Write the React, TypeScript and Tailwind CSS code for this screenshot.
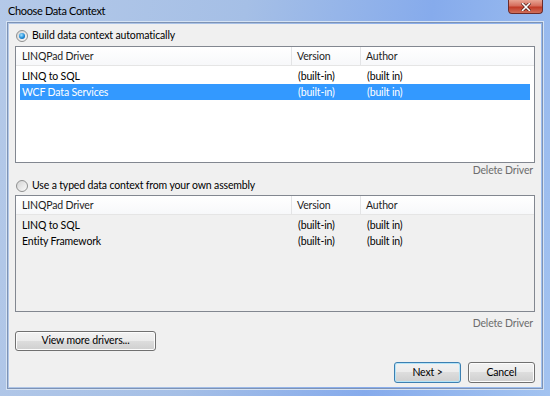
import React from 'react';

const font = { fontFamily: '"Segoe UI", Lato, "Open Sans", sans-serif' };

type Row = { name: string; version: string; author: string };

const autoDrivers: Row[] = [
  { name: 'LINQ to SQL', version: '(built-in)', author: '(built in)' },
  { name: 'WCF Data Services', version: '(built-in)', author: '(built in)' },
];

const typedDrivers: Row[] = [
  { name: 'LINQ to SQL', version: '(built-in)', author: '(built in)' },
  { name: 'Entity Framework', version: '(built-in)', author: '(built in)' },
];

function Radio({ checked }: { checked?: boolean }) {
  return (
    <span className="relative flex h-[12px] w-[12px] items-center justify-center rounded-full border border-[#8e8f8f] bg-gradient-to-br from-[#d4d4d4] to-[#fafafa]">
      {checked && (
        <span className="h-[6px] w-[6px] rounded-full bg-[radial-gradient(circle_at_40%_35%,#a6e3ff,#1b8ad8_55%,#0a4f8e)]" />
      )}
    </span>
  );
}

function DriverList({ rows, selected, disabled }: { rows: Row[]; selected?: number; disabled?: boolean }) {
  return (
    <div className={`h-[117px] border border-[#828790] ${disabled ? 'bg-[#f0f0f0]' : 'bg-white'}`}>
      <div className="flex h-[19px] items-center border-b border-[#e5e5e5] bg-gradient-to-b from-white to-[#f7f8fa] text-[#1e1e1e]">
        <div className="w-[276px] border-r border-[#e3e4e6] pl-[6px] leading-[18px]">LINQPad Driver</div>
        <div className="w-[69px] border-r border-[#e3e4e6] pl-[5px] leading-[18px]">Version</div>
        <div className="flex-1 pl-[5px] leading-[18px]">Author</div>
      </div>
      <div className="px-[4px] pt-[2px]">
        {rows.map((r, i) => {
          const sel = i === selected;
          return (
            <div
              key={i}
              className={`flex h-[16px] items-center leading-[16px] ${sel ? 'bg-[#3399ff] text-white' : 'text-black'}`}
            >
              <div className="w-[277px] pl-[2px]">{r.name}</div>
              <div className="w-[69px] pl-[1px]">{r.version}</div>
              <div className="flex-1 pl-[1px]">{r.author}</div>
            </div>
          );
        })}
      </div>
    </div>
  );
}

function Button({ children, focused, className }: { children: React.ReactNode; focused?: boolean; className?: string }) {
  return (
    <div
      className={`flex items-center justify-center rounded-[3px] border ${
        focused ? 'border-[#3c7fb1] shadow-[inset_0_0_0_1px_#b4e4f8]' : 'border-[#707070] shadow-[inset_0_0_0_1px_#fcfcfc]'
      } bg-[linear-gradient(#f2f2f2,#ebebeb_50%,#dddddd_50%,#cfcfcf)] text-black ${className ?? ''}`}
    >
      {children}
    </div>
  );
}

export default function App() {
  return (
    <div
      style={font}
      className="flex h-[396px] w-[550px] flex-col overflow-hidden bg-[linear-gradient(100deg,#b4c9e8,#a5bfe6_40%,#86abec_70%,#a3c3f0)] text-[10.5px] tracking-[-0.15px]"
    >
      <div className="flex h-[22px] items-start justify-between">
        <div className="pl-[8px] pt-[4px] text-[11px] leading-[14px] tracking-[-0.35px] text-black">Choose Data Context</div>
        <div className="mr-[7px] flex h-[14px] w-[35px] items-center justify-center rounded-b-[4px] border border-t-0 border-[#6b2b2b] bg-[linear-gradient(#e8a493,#d56d5c_45%,#c13a26_55%,#d0705c)]">
          <svg width="10" height="8" viewBox="0 0 10 8">
            <path d="M1.5 0.5 L8.5 7.5 M8.5 0.5 L1.5 7.5" stroke="#4a1a14" strokeWidth="3" strokeLinecap="square" />
            <path d="M1.5 0.5 L8.5 7.5 M8.5 0.5 L1.5 7.5" stroke="#ffffff" strokeWidth="1.6" strokeLinecap="square" />
          </svg>
        </div>
      </div>

      <div className="mx-[7px] mb-[7px] flex-1 border border-[#7e93b5] p-[1px] shadow-[0_0_0_1px_#d6e3f3]">
        <div className="flex h-full flex-col bg-[#f0f0f0] px-[6px] pt-[5px]">
          <div className="flex h-[14px] items-center gap-[4px] pl-[1px] text-black">
            <Radio checked />
            <span>Build data context automatically</span>
          </div>
          <div className="mt-[3px]">
            <DriverList rows={autoDrivers} selected={1} />
          </div>
          <div className="flex h-[16px] items-center justify-end pr-[2px] text-[#6d6d6d]">Delete Driver</div>
          <div className="flex h-[14px] items-center gap-[4px] pl-[1px] text-black">
            <Radio />
            <span>Use a typed data context from your own assembly</span>
          </div>
          <div className="mt-[2px]">
            <DriverList rows={typedDrivers} disabled />
          </div>
          <div className="flex h-[18px] items-end justify-end pr-[2px] leading-[14px] text-[#6d6d6d]">Delete Driver</div>
          <div className="mt-[1px]">
            <Button className="h-[20px] w-[141px]">View more drivers...</Button>
          </div>
          <div className="mt-[11px] flex justify-end gap-[7px]">
            <Button focused className="h-[21px] w-[67px]">Next &gt;</Button>
            <Button className="h-[21px] w-[67px]">Cancel</Button>
          </div>
        </div>
      </div>
    </div>
  );
}
